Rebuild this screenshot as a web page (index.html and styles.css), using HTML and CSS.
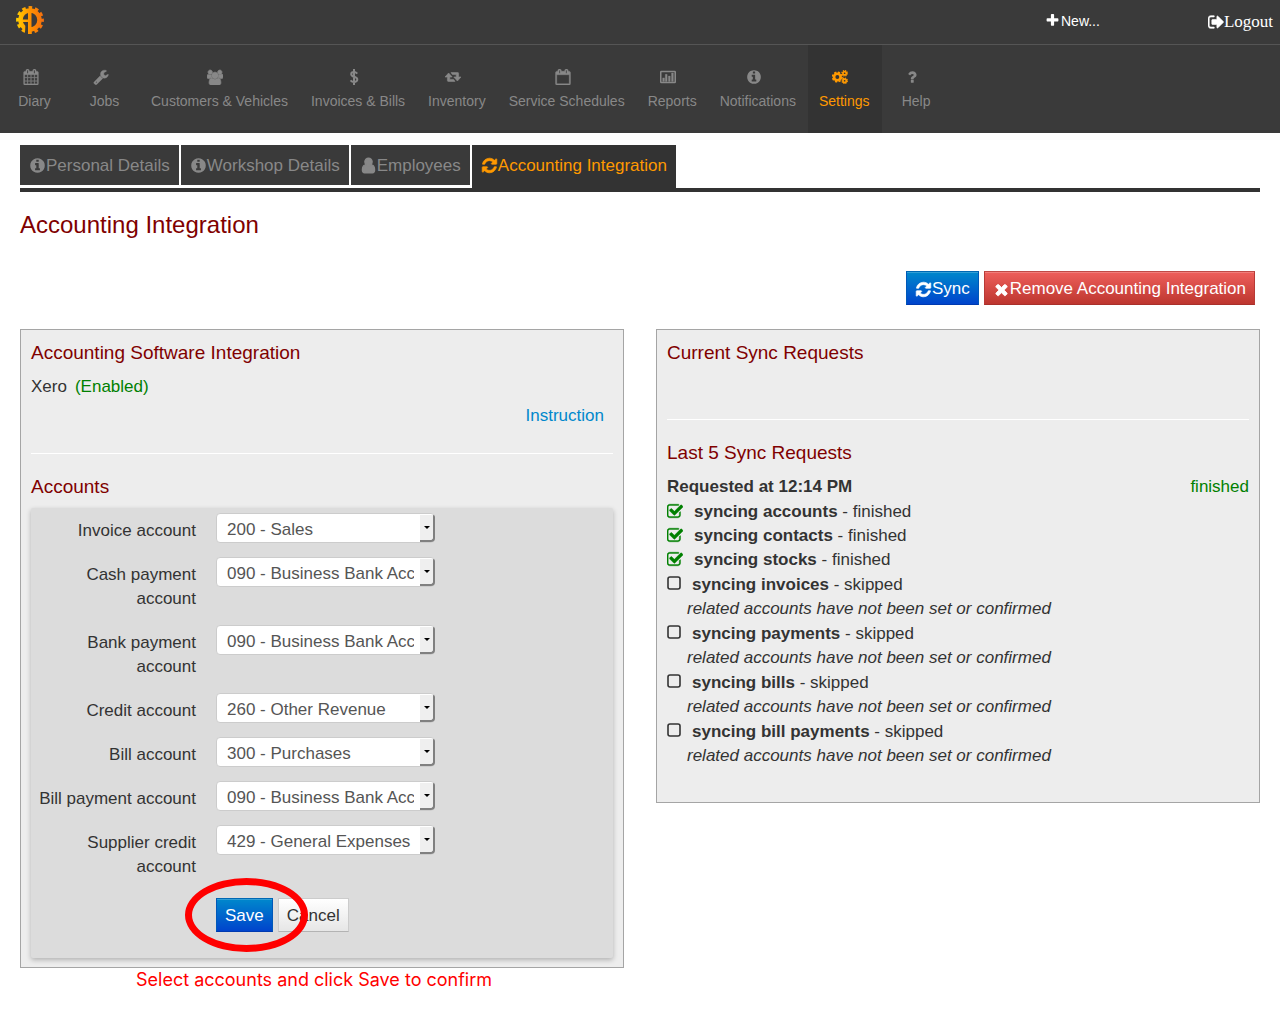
FILE: index.html
```html
<!DOCTYPE html>
<html lang="en">
<head>
<meta charset="utf-8">
<meta name="viewport" content="width=device-width, initial-scale=1">
<title>Accounting Integration</title>
<link rel="stylesheet" href="styles.css">
</head>
<body>
<svg class="sprite" aria-hidden="true">
  <symbol id="plus" viewBox="0 0 1792 1792"><path d="M1600 736v192q0 40-28 68t-68 28h-416v416q0 40-28 68t-68 28h-192q-40 0-68-28t-28-68v-416h-416q-40 0-68-28t-28-68v-192q0-40 28-68t68-28h416v-416q0-40 28-68t68-28h192q40 0 68 28t28 68v416h416q40 0 68 28t28 68z"/></symbol>
  <symbol id="times" viewBox="0 0 1792 1792"><path d="M1490 1322q0 40-28 68l-136 136q-28 28-68 28t-68-28l-294-294-294 294q-28 28-68 28t-68-28l-136-136q-28-28-28-68t28-68l294-294-294-294q-28-28-28-68t28-68l136-136q28-28 68-28t68 28l294 294 294-294q28-28 68-28t68 28l136 136q28 28 28 68t-28 68l-294 294 294 294q28 28 28 68z" stroke="currentColor" stroke-width="90"/></symbol>
  <symbol id="info" viewBox="0 0 1792 1792"><path d="M1152 1376v-160q0-14-9-23t-23-9h-96v-512q0-14-9-23t-23-9h-320q-14 0-23 9t-9 23v160q0 14 9 23t23 9h96v320h-96q-14 0-23 9t-9 23v160q0 14 9 23t23 9h448q14 0 23-9t9-23zm-128-896v-160q0-14-9-23t-23-9h-192q-14 0-23 9t-9 23v160q0 14 9 23t23 9h192q14 0 23-9t9-23zm640 416q0 209-103 385.5t-279.5 279.5-385.5 103-385.5-103-279.5-279.5-103-385.5 103-385.5 279.5-279.5 385.5-103 385.5 103 279.5 279.5 103 385.5z"/></symbol>
  <symbol id="refresh" viewBox="0 0 1792 1792"><path d="M1639 1056q0 5-1 7-64 268-268 434.5t-478 166.5q-146 0-282.5-55t-243.5-157l-129 129q-19 19-45 19t-45-19-19-45v-448q0-26 19-45t45-19h448q26 0 45 19t19 45-19 45l-137 137q71 66 161 102t187 36q134 0 250-65t186-179q11-17 53-117 8-23 30-23h192q13 0 22.5 9.5t9.5 22.5zm25-800v448q0 26-19 45t-45 19h-448q-26 0-45-19t-19-45 19-45l138-138q-148-137-349-137-134 0-250 65t-186 179q-11 17-53 117-8 23-30 23h-199q-13 0-22.5-9.5t-9.5-22.5v-7q65-268 270-434.5t480-166.5q146 0 284 55.5t245 156.5l130-129q19-19 45-19t45 19 19 45z" stroke="currentColor" stroke-width="70"/></symbol>
  <symbol id="calendar" viewBox="0 0 1792 1792"><path d="M192 1664h288v-288h-288v288zm352 0h320v-288h-320v288zm-352-352h288v-320h-288v320zm352 0h320v-320h-320v320zm-352-384h288v-288h-288v288zm736 736h320v-288h-320v288zm-384-736h320v-288h-320v288zm768 736h288v-288h-288v288zm-384-352h320v-320h-320v320zm-352-864v-288q0-13-9.5-22.5t-22.5-9.5h-64q-13 0-22.5 9.5t-9.5 22.5v288q0 13 9.5 22.5t22.5 9.5h64q13 0 22.5-9.5t9.5-22.5zm736 864h288v-320h-288v320zm-384-384h320v-288h-320v288zm384 0h288v-288h-288v288zm32-480v-288q0-13-9.5-22.5t-22.5-9.5h-64q-13 0-22.5 9.5t-9.5 22.5v288q0 13 9.5 22.5t22.5 9.5h64q13 0 22.5-9.5t9.5-22.5zm384-64v1280q0 52-38 90t-90 38h-1408q-52 0-90-38t-38-90v-1280q0-52 38-90t90-38h128v-96q0-66 47-113t113-47h64q66 0 113 47t47 113v96h384v-96q0-66 47-113t113-47h64q66 0 113 47t47 113v96h128q52 0 90 38t38 90z" stroke="currentColor" stroke-width="30"/></symbol>
  <symbol id="calendar-blank" viewBox="0 0 1792 1792"><path fill-rule="evenodd" stroke="currentColor" stroke-width="50" d="M192 1664h1408v-1024h-1408zM1728 384v1280q0 52-38 90t-90 38h-1408q-52 0-90-38t-38-90v-1280q0-52 38-90t90-38h128v-96q0-66 47-113t113-47h64q66 0 113 47t47 113v96h384v-96q0-66 47-113t113-47h64q66 0 113 47t47 113v96h128q52 0 90 38t38 90zM448 160v288q0 32 32 32h64q32 0 32-32v-288q0-32-32-32h-64q-32 0-32 32zM1216 160v288q0 32 32 32h64q32 0 32-32v-288q0-32-32-32h-64q-32 0-32 32z"/></symbol>
  <symbol id="wrench" viewBox="0 0 1792 1792"><path d="M448 1472q0-26-19-45t-45-19-45 19-19 45 19 45 45 19 45-19 19-45zm644-420l-682 682q-37 37-90 37-52 0-91-37l-106-108q-38-36-38-90 0-53 38-91l681-681q39 98 114.5 173.5t173.5 114.5zm634-435q0 39-23 106-47 134-164.5 217.5t-258.5 83.5q-185 0-316.5-131.5t-131.5-316.5 131.5-316.5 316.5-131.5q58 0 121.5 16.5t107.5 46.5q16 11 16 28t-16 28l-293 169v224l193 107q5-3 79-48.5t135.5-81 70.5-35.5q15 0 23.5 10t8.5 25z" stroke="currentColor" stroke-width="40"/></symbol>
  <symbol id="user" viewBox="100 0 1592 1792"><path d="M1536 1399q0 109-62.5 187t-150.5 78h-854q-88 0-150.5-78t-62.5-187q0-85 8.5-160.5t31.5-152 58.5-131 94-89 134.5-34.5q131 128 313 128t313-128q76 0 134.5 34.5t94 89 58.5 131 31.5 152 8.5 160.5zm-256-887q0 159-112.5 271.5t-271.5 112.5-271.5-112.5-112.5-271.5 112.5-271.5 271.5-112.5 271.5 112.5 112.5 271.5z" stroke="currentColor" stroke-width="140"/></symbol>
  <symbol id="users" viewBox="-64 0 1920 1664"><path d="M529 896q-162 5-265 128h-134q-82 0-138-40.5t-56-118.5q0-353 124-353 6 0 43.5 21t97.5 42.5 119 21.5q67 0 133-23-5 37-5 66 0 159 90 306zm1071 637q0 120-73 189.5t-194 69.5h-874q-121 0-194-69.5t-73-189.5q0-53 3.5-103.5t14-109 26.5-108.5 43-97.5 62-81 85.5-53.5 111.5-20q10 0 43 21.5t73 48 107 48 135 21.5 135-21.5 107-48 73-48 43-21.5q61 0 111.5 20t85.5 53.5 62 81 43 97.5 26.5 108.5 14 109 3.5 103.500zm-1024-1277q0 106-75 181t-181 75-181-75-75-181 75-181 181-75 181 75 75 181zm704 384q0 159-112.5 271.5t-271.5 112.5-271.5-112.5-112.5-271.5 112.5-271.5 271.5-112.5 271.5 112.5 112.5 271.5zm576 225q0 78-56 118.5t-138 40.5h-134q-103-123-265-128 90-147 90-306 0-29-5-66 66 23 133 23 59 0 119-21.5t97.5-42.5 43.5-21q124 0 124 353zm-128-609q0 106-75 181t-181 75-181-75-75-181 75-181 181-75 181 75 75 181z" stroke="currentColor" stroke-width="90"/></symbol>
  <symbol id="dollar" viewBox="0 0 16 16"><path d="M8 0v16M11.300 4.600C10.300 3.600 9.200 3 8 3 6.300 3 5.200 3.900 5.200 5.200c0 3.300 6.100 1.900 6.100 5.300C11.300 12 10 13 8.100 13 6.700 13 5.400 12.400 4.500 11.400" fill="none" stroke="currentColor" stroke-width="2"/></symbol>
  <symbol id="retweet" viewBox="0 0 20 16"><path stroke="currentColor" stroke-width=".8" d="M12.500 13.500H4q-1 0-1-1V8H0l4.500-5L9 8H6v3h4.700zM7.500 2.500H16q1 0 1 1V8h3l-4.500 5L11 8h3V5H9.300z"/></symbol>
  <symbol id="chart" viewBox="0 0 18 16"><path fill-rule="evenodd" d="M1.500 1h15Q18 1 18 2.500v11q0 1.500-1.500 1.500h-15Q0 15 0 13.500v-11Q0 1 1.500 1zM1.700 2.700v10.600h14.600V2.700z"/><path d="M3 9h2v4H3zM6 5h2v8H6zM9.500 7h2v6h-2zM13 3.500h2V13h-2z" stroke="currentColor" stroke-width=".4"/></symbol>
  <symbol id="cogs" viewBox="0 0 18 16"><g fill="none" stroke="currentColor"><circle cx="6" cy="8" r="3.700" stroke-width="3"/><circle cx="6" cy="8" r="5.400" stroke-width="1.800" stroke-dasharray="2.420 1.820"/><circle cx="14.200" cy="3.800" r="1.900" stroke-width="1.900"/><circle cx="14.200" cy="3.800" r="3" stroke-width="1.400" stroke-dasharray="1.380 .980"/><circle cx="14.200" cy="12.200" r="1.900" stroke-width="1.900"/><circle cx="14.200" cy="12.200" r="3" stroke-width="1.400" stroke-dasharray="1.380 .980"/></g></symbol>
  <symbol id="question" viewBox="0 0 1792 1792"><path d="M1088 1256v240q0 16-12 28t-28 12h-240q-16 0-28-12t-12-28v-240q0-16 12-28t28-12h240q16 0 28 12t12 28zm316-600q0 54-15.500 101t-35 76.500-55 59.500-57.500 43.500-61 35.500q-41 23-68.500 65t-27.500 67q0 17-12 32.500t-28 15.500h-240q-15 0-25.500-18.500t-10.500-37.500v-45q0-83 65-156.500t143-108.500q59-27 84-56t25-76q0-42-46.500-74t-107.500-32q-65 0-108 29-35 25-107 115-13 16-31 16-12 0-25-8l-164-125q-13-10-15.500-25t5.500-28q160-266 464-266 80 0 161 31t146 83 106 127.500 41 158.500z"/></symbol>
  <symbol id="logout" viewBox="64 0 1620 1792"><path stroke="currentColor" stroke-width="60" d="M704 1440q0 4 1 20t.5 26.500-3 23.500-10 19.500-20.500 6.500h-320q-119 0-203.500-84.500t-84.500-203.500v-704q0-119 84.500-203.500t203.500-84.500h320q13 0 22.500 9.500t9.500 22.500q0 4 1 20t.5 26.500-3 23.500-10 19.500-20.500 6.500h-320q-66 0-113 47t-47 113v704q0 66 47 113t113 47h312q32 0 40 32zm928-544q0 26-19 45l-544 544q-19 19-45 19t-45-19-19-45v-288h-448q-26 0-45-19t-19-45v-384q0-26 19-45t45-19h448v-288q0-26 19-45t45-19 45 19l544 544q19 19 19 45z"/></symbol>
  <symbol id="checked" viewBox="64 0 1664 1664"><path stroke="currentColor" stroke-width="40" d="M1472 930v318q0 119-84.500 203.500t-203.500 84.500h-832q-119 0-203.500-84.500t-84.500-203.500v-832q0-119 84.500-203.500t203.500-84.500h832q63 0 117 25 15 7 18 23 3 17-9 29l-49 49q-10 10-23 10-3 0-9-2-23-6-45-6h-832q-66 0-113 47t-47 113v832q0 66 47 113t113 47h832q66 0 113-47t47-113v-254q0-13 9-22l64-64q10-10 23-10 6 0 12 3 20 8 20 29zm231-489l-814 814q-24 24-57 24t-57-24l-430-430q-24-24-24-57t24-57l110-110q24-24 57-24t57 24l263 263 647-647q24-24 57-24t57 24l110 110q24 24 24 57t-24 57z"/></symbol>
  <symbol id="unchecked" viewBox="0 0 16 16"><rect x="1" y="2" width="12" height="12" rx="2" fill="none" stroke="currentColor" stroke-width="1.600"/></symbol>
</svg>

<header class="topbar">
  <a class="brand" href="#" aria-label="Home">
    <svg viewBox="0 0 28 28">
      <defs><linearGradient id="gold" gradientUnits="userSpaceOnUse" x1="0" y1="0" x2="28" y2="0"><stop offset="0" stop-color="#ffd000"/><stop offset=".5" stop-color="#ff9200"/><stop offset="1" stop-color="#f36c10"/></linearGradient></defs>
      <g fill="none" stroke="url(#gold)">
        <circle cx="14" cy="14" r="9.500" stroke-width="4.500"/>
        <circle cx="14" cy="14" r="12.300" stroke-width="3.200" stroke-dasharray="3.600 2.840" stroke-dashoffset="1.800"/>
      </g>
      <path d="M9.500 16H12v12H9z" fill="#3a3a3a"/>
      <path d="M12 5h3.500v23H12V16H6v-2.500h6z" fill="url(#gold)"/>
    </svg>
  </a>
  <nav class="session" aria-label="Session">
    <a class="new-link" href="#"><svg class="icon-s"><use href="#plus"/></svg>New...</a>
    <a class="logout-link" href="#"><svg class="icon-m"><use href="#logout"/></svg>Logout</a>
  </nav>
</header>

<nav class="mainnav" aria-label="Main">
  <a href="#"><svg><use href="#calendar"/></svg>Diary</a>
  <a href="#"><svg><use href="#wrench"/></svg>Jobs</a>
  <a href="#"><svg><use href="#users"/></svg>Customers &amp; Vehicles</a>
  <a href="#"><svg><use href="#dollar"/></svg>Invoices &amp; Bills</a>
  <a href="#"><svg><use href="#retweet"/></svg>Inventory</a>
  <a href="#"><svg><use href="#calendar-blank"/></svg>Service Schedules</a>
  <a href="#"><svg><use href="#chart"/></svg>Reports</a>
  <a href="#"><svg><use href="#info"/></svg>Notifications</a>
  <a class="active" href="#" aria-current="page"><svg><use href="#cogs"/></svg>Settings</a>
  <a href="#"><svg><use href="#question"/></svg>Help</a>
</nav>

<main class="content">
  <nav class="tabs" aria-label="Settings">
    <a href="#"><svg><use href="#info"/></svg>Personal Details</a>
    <a href="#"><svg><use href="#info"/></svg>Workshop Details</a>
    <a href="#"><svg><use href="#user"/></svg>Employees</a>
    <a class="active" href="#" aria-current="page"><svg><use href="#refresh"/></svg>Accounting Integration</a>
  </nav>

  <h1>Accounting Integration</h1>

  <div class="actions">
    <button class="btn primary" type="button"><svg><use href="#refresh"/></svg>Sync</button>
    <button class="btn danger" type="button"><svg><use href="#times"/></svg>Remove Accounting Integration</button>
  </div>

  <div class="columns">
    <div class="column">
      <section class="panel">
        <h2>Accounting Software Integration</h2>
        <p class="software">Xero <span class="ok">(Enabled)</span></p>
        <p class="instruction"><a href="#">Instruction</a></p>
        <hr>
        <h2>Accounts</h2>
        <form class="accounts">
          <div class="field"><label for="invoice">Invoice account</label><span class="select"><select id="invoice"><option>200 - Sales</option></select></span></div>
          <div class="field"><label for="cash">Cash payment account</label><span class="select"><select id="cash"><option>090 - Business Bank Account</option></select></span></div>
          <div class="field"><label for="bank">Bank payment account</label><span class="select"><select id="bank"><option>090 - Business Bank Account</option></select></span></div>
          <div class="field"><label for="credit">Credit account</label><span class="select"><select id="credit"><option>260 - Other Revenue</option></select></span></div>
          <div class="field"><label for="bill">Bill account</label><span class="select"><select id="bill"><option>300 - Purchases</option></select></span></div>
          <div class="field"><label for="billpay">Bill payment account</label><span class="select"><select id="billpay"><option>090 - Business Bank Account</option></select></span></div>
          <div class="field"><label for="supplier">Supplier credit account</label><span class="select"><select id="supplier"><option>429 - General Expenses</option></select></span></div>
          <div class="buttons">
            <button class="btn primary" type="button">Save</button>
            <button class="btn" type="button">Cancel</button>
            <span class="ring"></span>
          </div>
        </form>
      </section>
      <p class="hint">Select accounts and click Save to confirm</p>
    </div>

    <section class="panel">
      <h2>Current Sync Requests</h2>
      <hr class="short">
      <h2>Last 5 Sync Requests</h2>
      <div class="request"><strong>Requested at 12:14 PM</strong><span class="ok">finished</span></div>
      <ul class="steps">
        <li class="done"><svg><use href="#checked"/></svg><p><strong>syncing accounts</strong> - finished</p></li>
        <li class="done"><svg><use href="#checked"/></svg><p><strong>syncing contacts</strong> - finished</p></li>
        <li class="done"><svg><use href="#checked"/></svg><p><strong>syncing stocks</strong> - finished</p></li>
        <li><svg><use href="#unchecked"/></svg><p><strong>syncing invoices</strong> - skipped</p><em>related accounts have not been set or confirmed</em></li>
        <li><svg><use href="#unchecked"/></svg><p><strong>syncing payments</strong> - skipped</p><em>related accounts have not been set or confirmed</em></li>
        <li><svg><use href="#unchecked"/></svg><p><strong>syncing bills</strong> - skipped</p><em>related accounts have not been set or confirmed</em></li>
        <li><svg><use href="#unchecked"/></svg><p><strong>syncing bill payments</strong> - skipped</p><em>related accounts have not been set or confirmed</em></li>
      </ul>
    </section>
  </div>
</main>
</body>
</html>
```
FILE: styles.css
```css
*, *::before, *::after { box-sizing: border-box; }

body {
  margin: 0;
  background: #fff;
  color: #333;
  font: 17px/24px "Liberation Sans", Arial, sans-serif;
}

a { text-decoration: none; }
p, h1, h2, ul { margin: 0; }
svg { fill: currentColor; flex: none; }
.sprite { display: none; }
.ok { color: #008000; }

/* Top bar */
.topbar {
  display: flex;
  justify-content: space-between;
  height: 45px;
  padding: 0 7px 0 16px;
  background: #3a3a3a;
  border-bottom: 1px solid #555;
}
.brand { padding-top: 6px; line-height: 0; }
.brand svg { width: 28px; height: 28px; }
.session { display: flex; align-items: center; gap: 108px; }
.session a { display: flex; align-items: center; color: #fff; }
.new-link { gap: 1px; font-size: 14px; padding-bottom: 3px; }
.logout-link { font-family: "Liberation Serif", "Times New Roman", serif; }
.icon-s { width: 15px; height: 15px; }
.icon-m { width: 16px; height: 18px; }

/* Main navigation */
.mainnav {
  display: flex;
  height: 88px;
  background: #3a3a3a;
}
.mainnav a {
  display: flex;
  flex-direction: column;
  align-items: center;
  gap: 4px;
  min-width: 70px;
  padding: 24px 12px 0 11px;
  color: #888;
  font-size: 14px;
}
.mainnav svg { width: 16px; height: 16px; margin-right: 8px; }
.mainnav .active { background: #333; color: #ff9900; }

/* Page content */
.content { padding: 12px 20px 20px; }

.tabs {
  display: flex;
  align-items: flex-start;
  gap: 2px;
  border-bottom: 4px solid #333;
}
.tabs a {
  display: flex;
  align-items: center;
  height: 40px;
  margin-bottom: 3px;
  padding: 1px 9px 0;
  background: #3a3a3a;
  color: #888;
}
.tabs .active { margin-bottom: 0; padding-bottom: 3px; height: 43px; background: #333; color: #ff9900; }
.tabs svg { width: 17px; height: 17px; }

h1 {
  margin-top: 16px;
  color: #800000;
  font-size: 24px;
  font-weight: 400;
  line-height: 34px;
}
h2 {
  color: #800000;
  font-size: 19px;
  font-weight: 400;
  line-height: 24px;
}

.actions {
  display: flex;
  justify-content: flex-end;
  gap: 5px;
  margin: 29px 5px 24px 0;
}

.btn {
  display: flex;
  align-items: center;
  height: 34px;
  padding: 2px 8px 0;
  border: 1px solid #bbb;
  border-color: #ccc #ccc #b3b3b3;
  background: linear-gradient(#fff, #e6e6e6);
  box-shadow: inset 0 1px 0 rgba(255, 255, 255, .2);
  color: #333;
  font: inherit;
}
.btn svg { width: 17px; height: 17px; }
.btn.primary { border-color: #0068b3 #0058b8 #003ab0; background: linear-gradient(#0088cc, #0044cc); color: #fff; }
.btn.danger { border-color: #c04a46 #b83a36 #a9302b; background: linear-gradient(#ee5f5b, #bd362f); color: #fff; }

/* Panels */
.columns {
  display: grid;
  grid-template-columns: 1fr 1fr;
  gap: 32px;
  align-items: start;
}
.panel {
  padding: 11px 10px 9px;
  background: #ededed;
  border: 1px solid #a5a5a5;
}
hr {
  height: 1px;
  margin: 25px 0 21px;
  border: 0;
  background: #fff;
}
hr.short { margin-top: 54px; }

.software { display: flex; gap: 8px; margin-top: 10px; }
.instruction { margin-top: 5px; padding-right: 9px; text-align: right; }
.instruction a { color: #0088cc; }

/* Accounts form */
.accounts {
  display: grid;
  gap: 14px;
  margin-top: 9px;
  padding: 5px 0 26px;
  background: #dcdcdc;
  border-radius: 2px;
  box-shadow: 0 2px 5px rgba(0, 0, 0, .25);
}
.field {
  display: grid;
  grid-template-columns: 165px 219px;
  gap: 20px;
  align-items: start;
}
.field label { padding-top: 6px; text-align: right; }
.select { position: relative; display: block; height: 30px; }
.select select {
  width: 100%;
  height: 30px;
  padding: 3px 20px 0 10px;
  appearance: none;
  background: #fff;
  border: 1px solid #ccc;
  border-radius: 4px;
  color: #555;
  font: inherit;
}
.select::before {
  content: "";
  position: absolute;
  top: 2px;
  right: 0;
  width: 15px;
  height: 27px;
  background: #efefef;
  border: solid #808080;
  border-width: 0 2px 2px 0;
  border-radius: 0 2px 4px 0;
  pointer-events: none;
}
.select::after {
  content: "";
  position: absolute;
  top: 13px;
  right: 5px;
  border: 3px solid transparent;
  border-top-color: #000;
  border-bottom: 0;
  pointer-events: none;
}

.buttons {
  position: relative;
  display: flex;
  gap: 5px;
  margin: 5px 0 0 185px;
}
.ring {
  position: absolute;
  top: -20px;
  left: -31px;
  width: 123px;
  height: 74px;
  border: 7px solid #f00;
  border-radius: 50%;
  pointer-events: none;
}
.hint {
  padding-left: 116px;
  color: #f00;
  font-family: Inter, sans-serif;
  font-size: 18px;
}

/* Sync requests */
.request { display: flex; justify-content: space-between; margin-top: 10px; }
.steps { padding: 1px 0 25px; list-style: none; }
.steps li {
  display: grid;
  grid-template-columns: 16px 1fr;
  column-gap: 9px;
  line-height: 25px;
}
.steps svg { width: 16px; height: 16px; margin-top: 3px; }
.steps .done { column-gap: 11px; line-height: 24px; }
.steps .done svg { color: #008000; }
.steps em { grid-column: 1 / -1; padding-left: 20px; line-height: 24px; }
```
